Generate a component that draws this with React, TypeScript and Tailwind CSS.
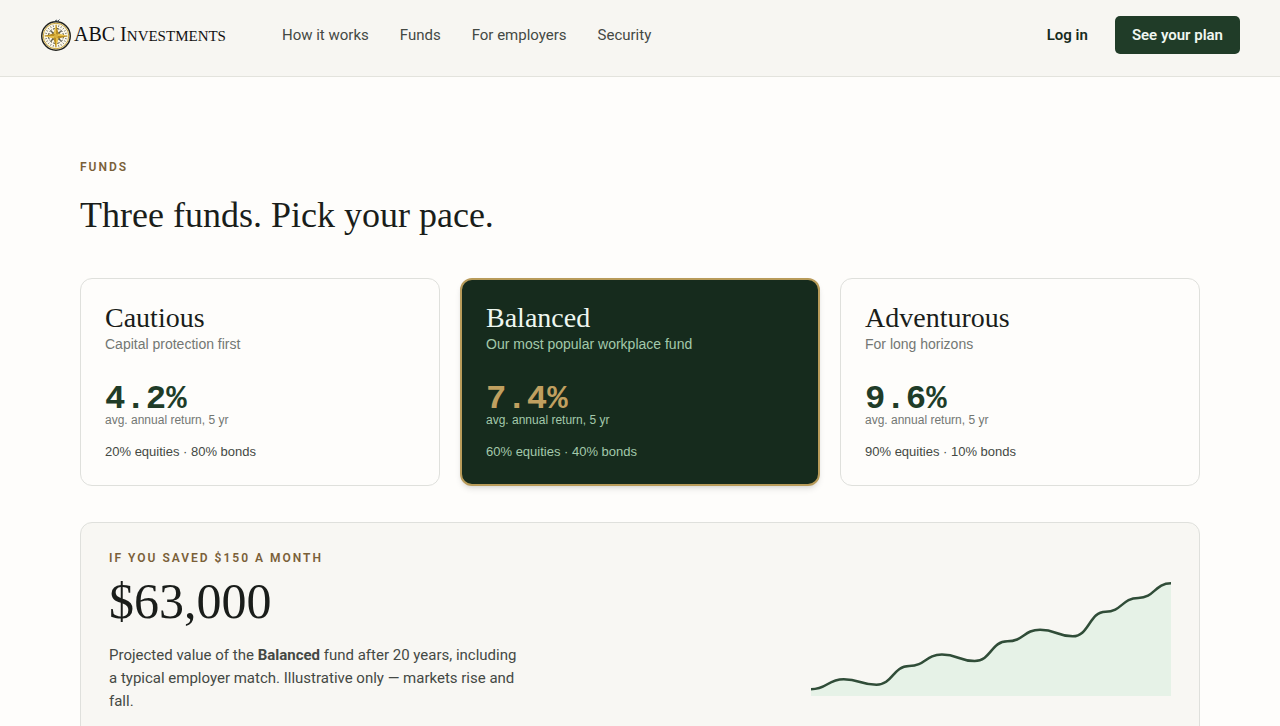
import React from "react";

type Fund = {
  name: string;
  tagline: string;
  rate: string;
  mix: string;
  featured?: boolean;
};

const NAV_LINKS = ["How it works", "Funds", "For employers", "Security"];

const FUNDS: Fund[] = [
  { name: "Cautious", tagline: "Capital protection first", rate: "4.2%", mix: "20% equities · 80% bonds" },
  { name: "Balanced", tagline: "Our most popular workplace fund", rate: "7.4%", mix: "60% equities · 40% bonds", featured: true },
  { name: "Adventurous", tagline: "For long horizons", rate: "9.6%", mix: "90% equities · 10% bonds" },
];

// y values with the baseline at 120, evenly spaced along x
const GROWTH = [113.3, 103.3, 108.7, 90, 78.5, 85, 65.3, 53.7, 60.3, 35.7, 22, 7.3];

function growthPath(values: number[]) {
  const step = 360 / (values.length - 1);
  return values.reduce((d, y, i) => {
    if (i === 0) return `M0 ${y}`;
    const mid = (i - 0.5) * step;
    return `${d} C${mid} ${values[i - 1]} ${mid} ${y} ${i * step} ${y}`;
  }, "");
}

function CompassLogo() {
  const ticks = Array.from({ length: 24 }, (_, i) => i * 15);
  return (
    <svg viewBox="0 0 64 64" className="h-8 w-8 shrink-0" aria-hidden="true">
      <circle cx="32" cy="34" r="28.5" fill="#faf6e8" stroke="#22231f" strokeWidth="3" />
      <circle cx="32" cy="34" r="25.5" fill="none" stroke="#c9a53c" strokeWidth="2" />
      <g transform="translate(0 2)">
        {ticks.map((a) => (
          <path key={a} d="M32 10v3" stroke="#55564c" strokeWidth="1.5" transform={`rotate(${a} 32 32)`} />
        ))}
        <circle cx="32" cy="32" r="15" fill="none" stroke="#34352f" strokeWidth="2" strokeDasharray="5 3" />
        {[45, 135, 225, 315].map((a) => (
          <path key={a} d="M32 15l3 13-3 4-3-4z" fill="#5b5a4c" transform={`rotate(${a} 32 32)`} />
        ))}
        {[0, 90, 180, 270].map((a) => (
          <g key={a} transform={`rotate(${a} 32 32)`}>
            <path d="M32 7l5 20-5 5z" fill="#b98d20" />
            <path d="M32 7l-5 20 5 5z" fill="#e6c04c" />
          </g>
        ))}
        <circle cx="32" cy="32" r="4" fill="#d9b03c" />
      </g>
      <path d="M29 5l4-3 2 3 4-4" fill="none" stroke="#3d4a55" strokeWidth="2" />
    </svg>
  );
}

function Header() {
  return (
    <header className="flex items-center border-b border-[#e3e3dd] bg-[#f7f6f2] px-10 pt-4 pb-[22px]">
      <a href="#" className="flex items-center gap-0.5 font-['Liberation_Serif',serif] text-xl leading-6 text-[#111111]">
        <CompassLogo />
        <span>
          ABC I<span className="text-[15px]">NVESTMENTS</span>
        </span>
      </a>
      <nav className="ml-14 flex gap-[31px] text-[15px] leading-6 text-[#444944]">
        {NAV_LINKS.map((label) => (
          <a key={label} href="#">
            {label}
          </a>
        ))}
      </nav>
      <div className="ml-auto flex items-center gap-[27px] text-[15px] font-semibold">
        <a href="#" className="text-[#162b1d]">
          Log in
        </a>
        <button type="button" className="h-[38px] rounded-[5px] bg-[#203c28] px-[17px] text-[#f0f7f1]">
          See your plan
        </button>
      </div>
    </header>
  );
}

function FundCard({ fund }: { fund: Fund }) {
  const { name, tagline, rate, mix, featured } = fund;
  return (
    <article
      className={
        featured
          ? "rounded-xl border-2 border-[#b89b5a] bg-[#162b1d] px-6 pt-6 pb-[22px] text-[#a3c9ab] shadow-md"
          : "rounded-xl border border-[#dfe0dc] px-6 pt-[25px] pb-[23px] text-[#737773]"
      }
    >
      <h3
        className={`font-['Liberation_Serif',serif] text-[28px] leading-7 ${featured ? "text-[#eef7f0]" : "text-[#1a1d1a]"}`}
      >
        {name}
      </h3>
      <p className="mt-1 text-sm leading-4">{tagline}</p>
      <p
        className={`mt-8 font-['Liberation_Mono',monospace] text-[34px] leading-[30px] font-bold ${featured ? "text-[#c0a060]" : "text-[#203c28]"}`}
      >
        {rate}
      </p>
      <p className="text-xs leading-3">avg. annual return, 5 yr</p>
      <p className={`mt-4 text-[13px] leading-5 ${featured ? "" : "text-[#444944]"}`}>{mix}</p>
    </article>
  );
}

function Projection() {
  const line = growthPath(GROWTH);
  return (
    <section className="mt-9 flex items-center justify-between rounded-xl border border-[#dfe0dc] bg-[#f8f7f3] p-7">
      <div className="max-w-[416px]">
        <p className="text-xs leading-[14px] font-semibold tracking-[2px] text-[#7a6038] uppercase">
          If you saved $150 a month
        </p>
        <p className="mt-2 font-['Liberation_Serif',serif] text-[50px] leading-[56px] text-[#1a1d1a]">$63,000</p>
        <p className="mt-[15px] text-[15px] leading-[23px] text-[#444944]">
          Projected value of the <strong>Balanced</strong> fund after 20 years, including a typical employer match.
          Illustrative only — markets rise and fall.
        </p>
      </div>
      <svg viewBox="0 -8 360 128" className="w-[360px] shrink-0" role="img" aria-label="Projected fund growth">
        <path d={`${line} V120 H0 Z`} fill="#e6f2e7" />
        <path d={line} fill="none" stroke="#304d38" strokeWidth="2.5" />
      </svg>
    </section>
  );
}

export default function App() {
  return (
    <div className="min-h-screen bg-[#fefdfb] font-['Roboto',sans-serif]">
      <Header />
      <main className="mx-auto max-w-[1200px] px-10 pt-[82px] pb-20">
        <p className="text-xs leading-4 font-semibold tracking-[2px] text-[#7a6038] uppercase">Funds</p>
        <h2 className="mt-4 font-['Liberation_Serif',serif] text-4xl leading-[48px] text-[#1a1d1a]">
          Three funds. Pick your pace.
        </h2>
        <div className="mt-[39px] grid grid-cols-3 gap-5 font-['Liberation_Sans',sans-serif]">
          {FUNDS.map((fund) => (
            <FundCard key={fund.name} fund={fund} />
          ))}
        </div>
        <Projection />
      </main>
    </div>
  );
}
